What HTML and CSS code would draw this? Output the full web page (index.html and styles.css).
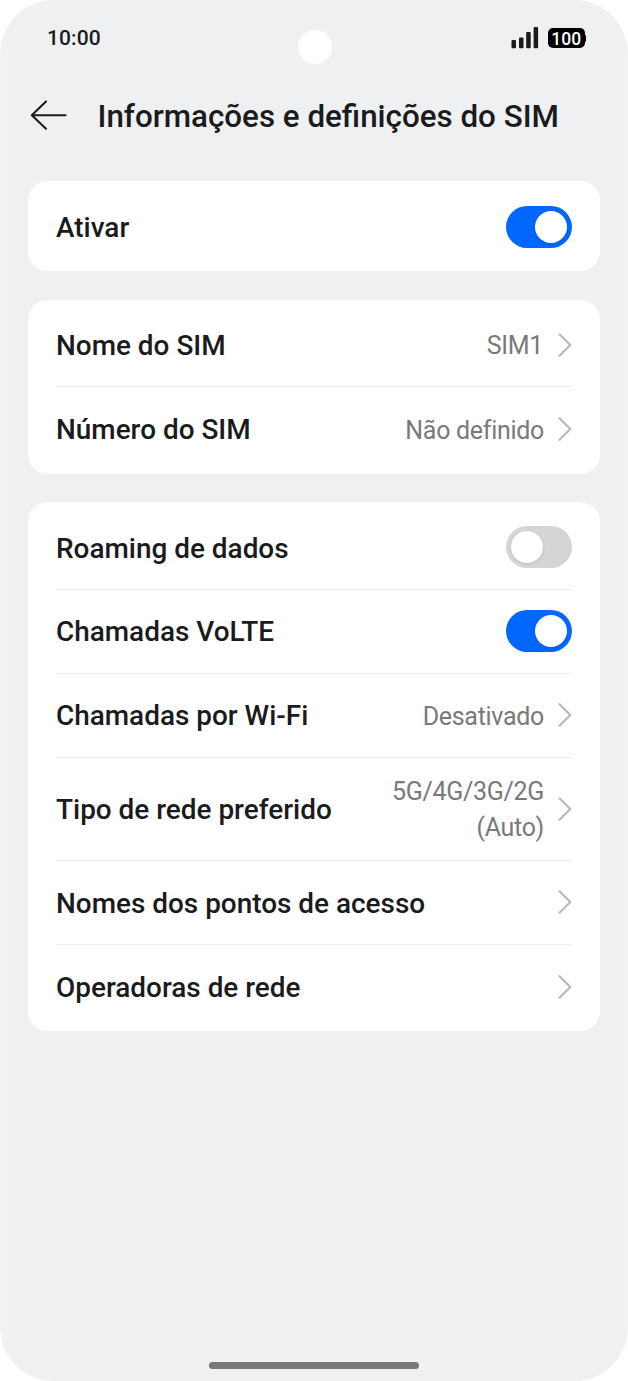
FILE: index.html
```html
<!DOCTYPE html>
<html lang="pt">
<head>
<meta charset="utf-8">
<title>Informações e definições do SIM</title>
<link rel="stylesheet" href="styles.css">
</head>
<body>
<div class="phone">
  <div class="camera"></div>
  <div class="status">
    <span class="time">10:00</span>
    <div class="status-icons">
      <svg class="signal" width="28" height="22" viewBox="0 0 28 22" fill="#1a1b1d">
        <rect x="0.5" y="13" width="4.5" height="8.2" rx="1"/><rect x="8" y="10.5" width="4.5" height="10.7" rx="1"/><rect x="15.2" y="5" width="4.5" height="16.2" rx="1"/><rect x="22.6" y="0" width="4.5" height="21.2" rx="1"/>
      </svg>
      <div class="battery"><span class="level">100</span></div>
    </div>
  </div>
  <header class="header">
    <svg class="back" width="38" height="32" viewBox="0 0 38 32" fill="none" stroke="#1a1b1d" stroke-width="2.1" stroke-linecap="round" stroke-linejoin="round"><path d="M17 2.5 2.8 16.2 17 29.7M2.8 16.2H36.5"/></svg>
    <h1 class="title">Informações e definições do SIM</h1>
  </header>
  <main class="cards">
    <section class="card">
      <div class="row"><span class="label">Ativar</span><span class="toggle on"><span class="knob"></span></span></div>
    </section>
    <section class="card">
      <div class="row"><span class="label">Nome do SIM</span><span class="value sim">SIM1</span><svg class="chevron" viewBox="0 0 14 26"><path d="M1.5 2.3 12.3 13 1.5 23.7"/></svg></div>
      <div class="row"><span class="label">Número do SIM</span><span class="value">Não definido</span><svg class="chevron" viewBox="0 0 14 26"><path d="M1.5 2.3 12.3 13 1.5 23.7"/></svg></div>
    </section>
    <section class="card">
      <div class="row"><span class="label">Roaming de dados</span><span class="toggle"><span class="knob"></span></span></div>
      <div class="row"><span class="label">Chamadas VoLTE</span><span class="toggle on"><span class="knob"></span></span></div>
      <div class="row"><span class="label">Chamadas por Wi-Fi</span><span class="value">Desativado</span><svg class="chevron" viewBox="0 0 14 26"><path d="M1.5 2.3 12.3 13 1.5 23.7"/></svg></div>
      <div class="row tall"><span class="label">Tipo de rede preferido</span><span class="value">5G/4G/3G/2G<br>(Auto)</span><svg class="chevron" viewBox="0 0 14 26"><path d="M1.5 2.3 12.3 13 1.5 23.7"/></svg></div>
      <div class="row"><span class="label">Nomes dos pontos de acesso</span><svg class="chevron" viewBox="0 0 14 26"><path d="M1.5 2.3 12.3 13 1.5 23.7"/></svg></div>
      <div class="row"><span class="label">Operadoras de rede</span><svg class="chevron" viewBox="0 0 14 26"><path d="M1.5 2.3 12.3 13 1.5 23.7"/></svg></div>
    </section>
  </main>
  <div class="home-bar"></div>
</div>
</body>
</html>
```
FILE: styles.css
```css
* { box-sizing: border-box; }
body { margin: 0; background: #fff; font-family: Roboto, sans-serif; color: #1a1b1d; }
.phone {
  position: relative;
  display: flex;
  flex-direction: column;
  width: 628px;
  height: 1381px;
  padding: 0 28px 12px;
  border-radius: 54px;
  background: linear-gradient(90deg, #f2f2f4, #eff0f2 12px, #eff0f2 616px, #f2f2f4);
}
.camera {
  position: absolute;
  top: 30px;
  left: 297.5px;
  width: 34px;
  height: 34px;
  border-radius: 50%;
  background: #fff;
}
.status {
  display: flex;
  justify-content: space-between;
  align-items: center;
  height: 76px;
  padding: 0 13px 0 19px;
}
.time { font-size: 21px; font-weight: 500; line-height: 24px; letter-spacing: 0.1px; }
.status-icons { display: flex; align-items: center; gap: 9px; }
.battery {
  position: relative;
  display: flex;
  align-items: center;
  justify-content: center;
  width: 36.5px;
  height: 20px;
  margin-right: 2.5px;
  border-radius: 5px;
  background: #000;
}
.battery::after {
  content: "";
  position: absolute;
  left: 36px;
  top: 6.5px;
  width: 2px;
  height: 7px;
  border-radius: 0 1px 1px 0;
  background: #000;
}
.level { padding-top: 1px; color: #fff; font-size: 17.5px; font-weight: 500; line-height: 20px; }
.header { display: flex; align-items: center; height: 78px; gap: 30.5px; padding-left: 1px; }
.title { margin: 0; padding-top: 3px; font-size: 31.35px; font-weight: 500; line-height: 38px; white-space: nowrap; }
.cards { display: flex; flex-direction: column; gap: 28.4px; padding-top: 27.4px; }
.card { padding: 3.7px 28px 3px; border-radius: 20px; background: #fff; }
.row { display: flex; align-items: center; height: 83.9px; border-bottom: 1px solid #ebebec; }
.row:last-child { height: 83.4px; border-bottom: 0; }
.row.tall { height: 103.4px; }
.label { flex: 1; padding-top: 2.3px; font-size: 27.93px; font-weight: 500; line-height: 36px; white-space: nowrap; }
.value { padding-top: 3px; color: #797979; font-size: 25px; letter-spacing: -0.3px; line-height: 36px; text-align: right; }
.sim { padding-right: 1px; }
.chevron {
  width: 14px;
  height: 26px;
  margin-left: 14px;
  fill: none;
  stroke: #b8b8b8;
  stroke-width: 2.1;
  stroke-linecap: round;
  stroke-linejoin: round;
}
.toggle { display: flex; align-items: center; width: 66px; height: 42px; padding: 0 5px; border-radius: 21px; background: #d5d5d5; }
.knob { width: 32px; height: 32px; border-radius: 50%; background: #fff; box-shadow: 0 1px 3px rgba(0, 0, 0, 0.12); }
.on { justify-content: flex-end; background: #0067ff; }
.home-bar { align-self: center; width: 210px; height: 7.5px; margin-top: auto; border-radius: 4px; background: #797979; }
```
